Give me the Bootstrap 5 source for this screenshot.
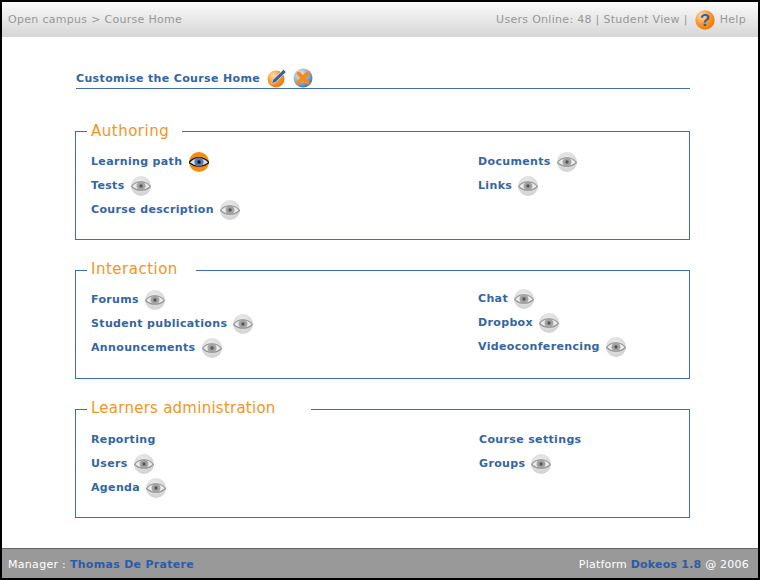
<!DOCTYPE html>
<html lang="en">
<head>
<meta charset="utf-8">
<title>Course Home</title>
<link href="https://cdn.jsdelivr.net/npm/bootstrap@5.3.0/dist/css/bootstrap.min.css" rel="stylesheet">
<style>
html,body{height:100%;margin:0;background:#fff}
body{font-family:"DejaVu Sans",Verdana,sans-serif;font-size:11px;line-height:14px;letter-spacing:.3px}
.shell{width:760px;height:580px;border:2px solid #000;display:flex;flex-direction:column;overflow:hidden}
.topbar{height:35px;flex:none;background:linear-gradient(#fafafa,#d6d6d6);color:#979797;padding:0 12px 0 6px}
.topbar svg{margin:0 5px 0 7px}
.main{flex:1 1 auto;padding:32px 68px 0 73px}
.headline{width:614px;margin-left:1px;height:20px;border-bottom:1px solid #3f6ead;display:flex;align-items:center;gap:7px;color:#3465a4;font-weight:700;font-size:11px;letter-spacing:.36px}
.headline svg{margin-bottom:2px}
.headline svg+svg{margin-left:-2px}
fieldset.panel{width:615px;height:118px;border:1px solid #3f6ead;margin:0 0 20px;padding:0}
.panel legend{float:none;width:auto;font-size:15px;line-height:18px;color:#f7931e;margin:0 0 0 11px;padding:0 13px 0 4px;letter-spacing:.5px}
.first{margin-top:33px!important}
.wide-gap legend{padding:0 18px 2px 4px}
.widest-gap legend{padding:0 35px 2px 4px;letter-spacing:.25px}
fieldset.wide-gap,fieldset.widest-gap{height:119px}
.cols{display:flex;padding:10px 0 0 15px}
.wide-gap .cols{padding-top:8px}
.widest-gap .cols{padding-top:9px}
.left{width:387px}
.item{height:24px;display:flex;align-items:center;gap:6px;color:#3465a4;font-weight:700;font-size:11px;letter-spacing:.35px;white-space:nowrap}
.item .on{margin-left:1px}
.up{margin-top:-1px}
.shift{padding-left:1px}
.bottombar{height:30px;flex:none;background:#999;border-top:1px solid #666;color:#fff;padding:2px 9px 0 6px}
.bottombar b{color:#2d5ca6}
.plat{letter-spacing:.22px}
</style>
</head>
<body>
<svg width="0" height="0" class="position-absolute">
<defs>
<radialGradient id="og" cx=".35" cy=".3" r=".8"><stop offset="0" stop-color="#ffe2b5"/><stop offset=".5" stop-color="#fb9a2c"/><stop offset="1" stop-color="#e86f05"/></radialGradient>
<radialGradient id="bg" cx=".35" cy=".3" r=".8"><stop offset="0" stop-color="#e6edf5"/><stop offset=".6" stop-color="#8aa8cd"/><stop offset="1" stop-color="#2f62a6"/></radialGradient>
<radialGradient id="gg" cx=".45" cy=".35" r=".75"><stop offset="0" stop-color="#eeeeee"/><stop offset="1" stop-color="#cdcdcd"/></radialGradient>
<symbol id="eye-off" viewBox="0 0 20 20"><circle cx="10" cy="10" r="10" fill="url(#gg)"/><path d="M.5 10.500C5 4.500 14 4 19.500 10.500 14 15.500 6 15.500.5 10.500Z" fill="#ececec" stroke="#939393" stroke-width="1.100"/><circle cx="10" cy="10" r="4.500" fill="#a3a3a3"/><circle cx="10" cy="10" r="1.700" fill="#555"/></symbol>
<symbol id="eye-on" viewBox="0 0 20 20"><circle cx="10" cy="10" r="10" fill="#f98a0e"/><path d="M0 10.500C5 4.500 14 3.500 20 10.500 14 15.500 6 15.500 0 10.500Z" fill="#d8e2ef" stroke="#111" stroke-width="1.300"/><circle cx="10" cy="10" r="4.600" fill="#5577b5"/><circle cx="10" cy="10" r="1.700" fill="#0c1530"/></symbol>
</defs>
</svg>
<div class="shell">
  <div class="topbar d-flex align-items-center justify-content-between">
    <span>Open campus &gt; Course Home</span>
    <span class="d-flex align-items-center">Users Online: 48 | Student View |<svg width="20" height="20" viewBox="0 0 20 20"><circle cx="10" cy="10" r="9.700" fill="url(#og)"/><text x="10" y="16" text-anchor="middle" font-family="Liberation Sans" font-weight="700" font-size="17" fill="#2f5fa8">?</text></svg>Help</span>
  </div>
  <div class="main">
    <div class="headline">Customise the Course Home
      <svg width="21" height="20" viewBox="0 0 21 20"><circle cx="9" cy="11" r="8.500" fill="url(#og)"/><path d="M4.500 15.500l1.200-3.600L16.500 1.500l2.600 2.600L8.300 14.500z" fill="#3465a4" stroke="#e6edf5" stroke-width=".7"/></svg>
      <svg width="20" height="20" viewBox="0 0 20 20"><circle cx="10" cy="10" r="9.500" fill="url(#bg)"/><path d="M5.500 5.500l9 9M14.500 5.500l-9 9" stroke="#f98a1a" stroke-width="4" stroke-linecap="round"/></svg>
    </div>
    <fieldset class="panel first">
      <legend>Authoring</legend>
      <div class="cols">
        <div class="left">
          <div class="item">Learning path <svg class="on" width="20" height="20"><use href="#eye-on"/></svg></div>
          <div class="item">Tests <svg width="20" height="20"><use href="#eye-off"/></svg></div>
          <div class="item">Course description <svg width="20" height="20"><use href="#eye-off"/></svg></div>
        </div>
        <div>
          <div class="item">Documents <svg width="20" height="20"><use href="#eye-off"/></svg></div>
          <div class="item">Links <svg width="20" height="20"><use href="#eye-off"/></svg></div>
        </div>
      </div>
    </fieldset>
    <fieldset class="panel wide-gap">
      <legend>Interaction</legend>
      <div class="cols">
        <div class="left">
          <div class="item">Forums <svg width="20" height="20"><use href="#eye-off"/></svg></div>
          <div class="item">Student publications <svg width="20" height="20"><use href="#eye-off"/></svg></div>
          <div class="item">Announcements <svg width="20" height="20"><use href="#eye-off"/></svg></div>
        </div>
        <div class="up">
          <div class="item">Chat <svg width="20" height="20"><use href="#eye-off"/></svg></div>
          <div class="item">Dropbox <svg width="20" height="20"><use href="#eye-off"/></svg></div>
          <div class="item">Videoconferencing <svg width="20" height="20"><use href="#eye-off"/></svg></div>
        </div>
      </div>
    </fieldset>
    <fieldset class="panel widest-gap">
      <legend>Learners administration</legend>
      <div class="cols">
        <div class="left">
          <div class="item">Reporting</div>
          <div class="item">Users <svg width="20" height="20"><use href="#eye-off"/></svg></div>
          <div class="item">Agenda <svg width="20" height="20"><use href="#eye-off"/></svg></div>
        </div>
        <div class="shift">
          <div class="item">Course settings</div>
          <div class="item">Groups <svg width="20" height="20"><use href="#eye-off"/></svg></div>
        </div>
      </div>
    </fieldset>
  </div>
  <div class="bottombar d-flex align-items-center justify-content-between">
    <span>Manager : <b>Thomas De Pratere</b></span>
    <span class="plat">Platform <b>Dokeos 1.8</b> @ 2006</span>
  </div>
</div>
<script src="https://cdn.jsdelivr.net/npm/bootstrap@5.3.0/dist/js/bootstrap.bundle.min.js"></script>
</body>
</html>
